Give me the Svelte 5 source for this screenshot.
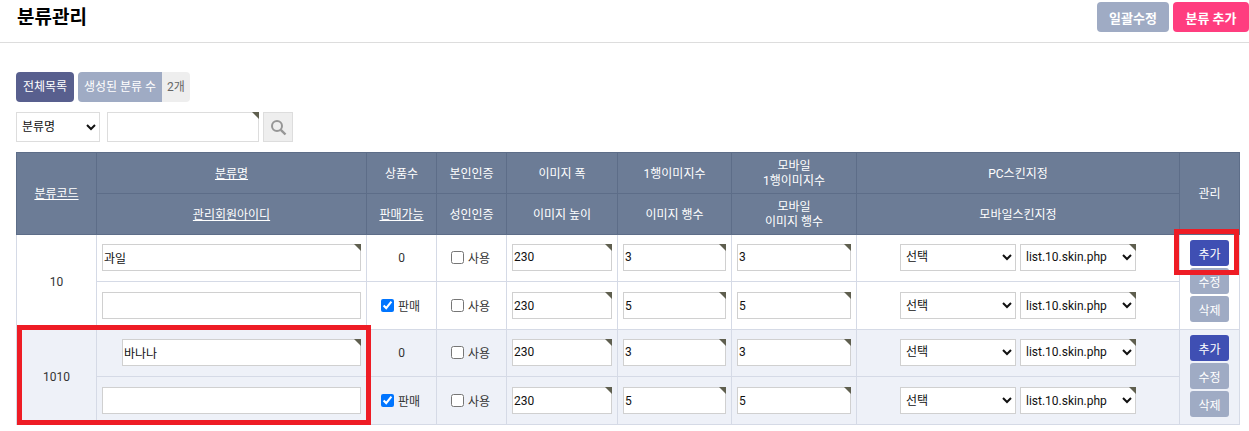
<script>
  const groups = [
    { code: '10', name: '과일', indent: false, count: 0, alt: false, pcRows: 3, mobRows: 3 },
    { code: '1010', name: '바나나', indent: true, count: 0, alt: true, pcRows: 3, mobRows: 3 }
  ];
</script>

<header class="top">
  <h1>분류관리</h1>
  <div class="top-actions">
    <button class="btn gray">일괄수정</button>
    <button class="btn pink">분류 추가</button>
  </div>
</header>

<main class="content">
  <div class="tabs">
    <span class="tab">전체목록</span>
    <span class="stat"><span class="stat-label">생성된 분류 수</span><span class="stat-value">2개</span></span>
  </div>

  <div class="search">
    <select class="search-select"><option>분류명</option></select>
    <span class="field search-field"><input type="text" /></span>
    <button class="search-btn" aria-label="검색">
      <svg width="17" height="17" viewBox="0 0 17 17" fill="none" stroke="#969696">
        <circle cx="7" cy="7" r="5" stroke-width="2" />
        <path d="M10.8 10.8 L15.5 15.5" stroke-width="2.4" />
      </svg>
    </button>
  </div>

  <table>
    <colgroup>
      <col style="width:80px" />
      <col style="width:270px" />
      <col style="width:70px" />
      <col style="width:70px" />
      <col style="width:111px" />
      <col style="width:114px" />
      <col style="width:125px" />
      <col style="width:323px" />
      <col style="width:60px" />
    </colgroup>
    <thead>
      <tr>
        <th rowspan="2"><u>분류코드</u></th>
        <th><u>분류명</u></th>
        <th>상품수</th>
        <th>본인인증</th>
        <th>이미지 폭</th>
        <th>1행이미지수</th>
        <th>모바일<br />1행이미지수</th>
        <th>PC스킨지정</th>
        <th rowspan="2">관리</th>
      </tr>
      <tr>
        <th><u>관리회원아이디</u></th>
        <th><u>판매가능</u></th>
        <th>성인인증</th>
        <th>이미지 높이</th>
        <th>이미지 행수</th>
        <th>모바일<br />이미지 행수</th>
        <th>모바일스킨지정</th>
      </tr>
    </thead>
    <tbody>
      {#each groups as g}
        <tr class="first" class:alt={g.alt}>
          <td rowspan="2">{g.code}</td>
          <td class="left">
            <span class="field name" class:indent={g.indent}><input type="text" value={g.name} /></span>
          </td>
          <td>{g.count}</td>
          <td><label class="check"><input type="checkbox" /> 사용</label></td>
          <td class="left"><span class="field"><input type="text" value="230" /></span></td>
          <td class="left"><span class="field"><input type="text" value={g.pcRows} /></span></td>
          <td class="left"><span class="field"><input type="text" value={g.mobRows} /></span></td>
          <td class="skin-cell">
            <div class="skins">
              <select><option>선택</option></select>
              <span class="field skin"><select><option>list.10.skin.php</option></select></span>
            </div>
          </td>
          <td rowspan="2" class="manage">
            <div class="manage-btns">
              <button class="small blue">추가</button>
              <button class="small gray">수정</button>
              <button class="small gray">삭제</button>
            </div>
          </td>
        </tr>
        <tr class="second" class:alt={g.alt}>
          <td class="left"><input class="plain" type="text" /></td>
          <td><label class="check"><input type="checkbox" checked /> 판매</label></td>
          <td><label class="check"><input type="checkbox" /> 사용</label></td>
          <td class="left"><span class="field"><input type="text" value="230" /></span></td>
          <td class="left"><span class="field"><input type="text" value="5" /></span></td>
          <td class="left"><span class="field"><input type="text" value="5" /></span></td>
          <td class="skin-cell">
            <div class="skins">
              <select><option>선택</option></select>
              <span class="field skin"><select><option>list.10.skin.php</option></select></span>
            </div>
          </td>
        </tr>
      {/each}
    </tbody>
  </table>
</main>

<!-- annotation boxes drawn over the screenshot -->
<div class="mark mark-btn"></div>
<div class="mark mark-row"></div>

<style>
  :global(body) {
    margin: 0;
    background: #fff;
    font-family: Roboto, "Noto Sans CJK KR", sans-serif;
    font-size: 12px;
    color: #222;
  }

  .top {
    display: flex;
    justify-content: space-between;
    align-items: flex-start;
    height: 43px;
    padding: 2px 0 0 17px;
    box-sizing: border-box;
    border-bottom: 1px solid #ddd;
  }

  h1 {
    margin: 0;
    font-size: 19px;
    line-height: 32px;
    font-weight: 700;
    color: #000;
  }

  .top-actions {
    display: flex;
    gap: 4px;
  }

  .btn {
    height: 30px;
    border: 0;
    border-radius: 4px;
    color: #fff;
    font: 700 13px Roboto, "Noto Sans CJK KR", sans-serif;
    padding: 0;
  }

  .btn.gray {
    width: 72px;
    background: #9fabc4;
  }

  .btn.pink {
    width: 76px;
    background: #ff3d7f;
  }

  .content {
    padding: 29px 9px 0 16px;
  }

  .tabs {
    display: flex;
    gap: 4px;
    height: 30px;
    line-height: 31px;
    font-size: 12px;
  }

  .tab {
    width: 58px;
    text-align: center;
    background: #585f8e;
    color: #fff;
    border-radius: 4px;
  }

  .stat {
    display: flex;
    border-radius: 4px;
    overflow: hidden;
  }

  .stat-label {
    width: 84px;
    text-align: center;
    background: #9fabc4;
    color: #fff;
  }

  .stat-value {
    width: 28px;
    text-align: center;
    background: #eee;
    color: #666;
  }

  .search {
    display: flex;
    margin-top: 10px;
    height: 30px;
  }

  .search-field {
    width: 152px;
    margin-left: 7px;
  }

  .search-btn {
    width: 30px;
    height: 30px;
    margin-left: 4px;
    padding: 0;
    border: 1px solid #ddd;
    background: #eee;
    display: flex;
    align-items: center;
    justify-content: center;
  }

  table {
    width: 1224px;
    margin-top: 10px;
    table-layout: fixed;
    border-collapse: collapse;
  }

  th {
    height: 41px;
    padding: 2px 0 0;
    box-sizing: border-box;
    background: #6c7c96;
    border: 1px solid #5d6d88;
    color: #fff;
    font-size: 12px;
    font-weight: 400;
    line-height: 15px;
    text-align: center;
  }

  td {
    padding: 0;
    box-sizing: border-box;
    border: 1px solid #d5dae6;
    text-align: center;
    font-size: 12px;
    color: #333;
  }

  tr.first td {
    height: 47px;
  }

  tr.second td {
    height: 48px;
  }

  tr.alt td {
    background: #eef1f8;
  }

  td.left {
    text-align: left;
    padding: 0 5px 2px;
  }

  td.skin-cell {
    padding-bottom: 2px;
  }

  tr.second td.left,
  tr.second td.skin-cell {
    padding-bottom: 0;
  }

  td.manage {
    padding-bottom: 2px;
  }

  .field {
    position: relative;
    display: block;
  }

  .field::after {
    content: "";
    position: absolute;
    top: 0;
    right: 0;
    border-style: solid;
    border-width: 0 7px 7px 0;
    border-color: transparent #5f5f4f transparent transparent;
  }

  .name.indent {
    margin-left: 20px;
  }

  input[type="text"],
  select {
    display: block;
    box-sizing: border-box;
    width: 100%;
    height: 27px;
    margin: 0;
    padding: 0 1px;
    border: 1px solid #d0d0d0;
    background-color: #fff;
    font: 12px Roboto, "Noto Sans CJK KR", sans-serif;
    color: #111;
    border-radius: 0;
  }

  .search input[type="text"] {
    height: 30px;
    border-color: #ddd;
  }

  .search .search-select {
    height: 30px;
    width: 84px;
    border-color: #ddd;
  }

  .skins {
    display: flex;
    justify-content: center;
    gap: 4px;
  }

  .skins select {
    width: 116px;
  }

  .skin {
    width: 116px;
  }

  .check {
    display: inline-flex;
    align-items: center;
    gap: 4px;
    padding-right: 2px;
  }

  .check input {
    width: 13px;
    height: 13px;
    margin: 0;
  }

  .manage-btns {
    display: flex;
    flex-direction: column;
    align-items: center;
    gap: 2px;
  }

  .small {
    width: 39px;
    height: 26px;
    padding: 0;
    border: 0;
    border-radius: 3px;
    color: #fff;
    font: 12px Roboto, "Noto Sans CJK KR", sans-serif;
  }

  .small.blue {
    background: #3f4fb3;
  }

  .small.gray {
    background: #9fabc4;
  }

  .mark {
    position: absolute;
    box-sizing: border-box;
    border: 5px solid #ee1c25;
    pointer-events: none;
  }

  .mark-btn {
    left: 1174px;
    top: 229px;
    width: 65px;
    height: 46px;
  }

  .mark-row {
    left: 17px;
    top: 325px;
    width: 354px;
    height: 100px;
  }
</style>
